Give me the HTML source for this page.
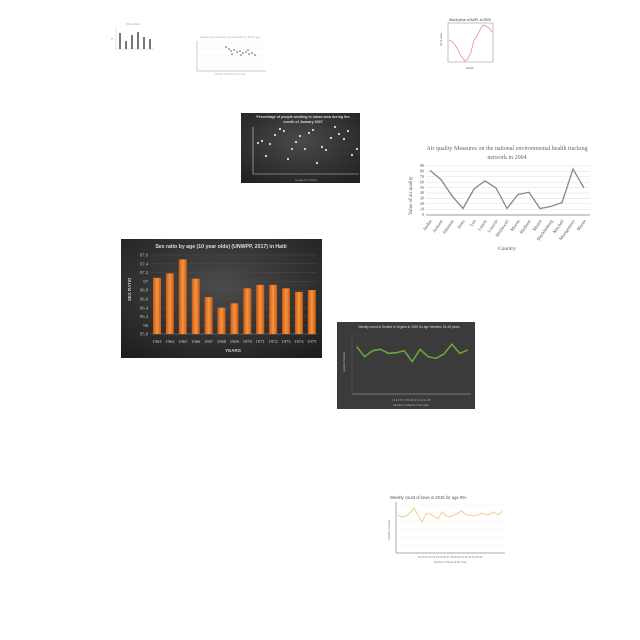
<!DOCTYPE html>
<html><head><meta charset="utf-8"><style>
html,body{margin:0;padding:0;background:#fff;width:640px;height:640px;overflow:hidden;position:relative;font-family:"Liberation Sans",sans-serif}
svg{position:absolute;display:block}
</style></head><body>

<!-- tiny bar chart -->
<svg style="left:108px;top:20px" width="50" height="34" viewBox="0 0 50 34">
<text x="25" y="5" font-size="2.5" fill="#999" text-anchor="middle">Title of chart</text>
<line x1="8" y1="8" x2="8" y2="29" stroke="#bbb" stroke-width="0.4"/>
<line x1="8" y1="29" x2="46" y2="29" stroke="#bbb" stroke-width="0.4"/>
<g fill="#777"><rect x="11" y="13" width="2" height="16"/><rect x="17" y="21" width="2" height="8"/><rect x="23" y="15" width="2" height="14"/><rect x="29" y="12" width="2" height="17"/><rect x="35" y="17" width="2" height="12"/><rect x="41" y="19" width="2" height="10"/></g>
<text x="3" y="20" font-size="2.5" fill="#999">%</text>
</svg>

<!-- light scatter -->
<svg style="left:188px;top:33px" width="80" height="42" viewBox="0 0 80 42">
<text x="42" y="5" font-size="2.4" fill="#aaa" text-anchor="middle">Weekly count of deaths in the Hampshire for 85 and age</text>
<g stroke="#eee" stroke-width="0.4"><line x1="9" y1="10" x2="78" y2="10"/><line x1="9" y1="16" x2="78" y2="16"/><line x1="9" y1="22" x2="78" y2="22"/><line x1="9" y1="28" x2="78" y2="28"/><line x1="9" y1="34" x2="78" y2="34"/></g>
<line x1="9" y1="8" x2="9" y2="38" stroke="#999" stroke-width="0.5"/>
<line x1="9" y1="38" x2="78" y2="38" stroke="#999" stroke-width="0.5"/>
<g fill="#556"><circle cx="38" cy="14" r="0.8"/><circle cx="41" cy="16" r="0.8"/><circle cx="43" cy="18" r="0.8"/><circle cx="46" cy="17" r="0.8"/><circle cx="49" cy="19" r="0.8"/><circle cx="52" cy="18" r="0.8"/><circle cx="55" cy="20" r="0.8"/><circle cx="58" cy="19" r="0.8"/><circle cx="61" cy="21" r="0.8"/><circle cx="64" cy="20" r="0.8"/><circle cx="67" cy="22" r="0.8"/><circle cx="44" cy="21" r="0.8"/><circle cx="53" cy="22" r="0.8"/><circle cx="60" cy="17" r="0.8"/></g>
<text x="42" y="42" font-size="2.4" fill="#aaa" text-anchor="middle">Number of Month of the year</text>
</svg>

<!-- stock price -->
<svg style="left:438px;top:16px" width="62" height="56" viewBox="0 0 62 56">
<text x="32" y="5" font-size="3.4" fill="#333" text-anchor="middle">Stock price of AAPL in 2000</text>
<rect x="10" y="7" width="45" height="39" fill="none" stroke="#888" stroke-width="0.5"/>
<polyline fill="none" stroke="#e58ca0" stroke-width="0.8" points="11,24 15,26 19,32 23,40 27,45 30,43 33,36 36,24 39,20 42,14 45,9 48,10 52,13 54,16"/>
<text x="4" y="30" font-size="2.5" fill="#666" transform="rotate(-90 4 30)">Stock value</text>
<text x="32" y="53" font-size="2.8" fill="#666" text-anchor="middle">Month</text>
</svg>

<!-- dark scatter -->
<svg style="left:241px;top:113px" width="119" height="70" viewBox="0 0 119 70">
<defs><radialGradient id="dg" cx="50%" cy="40%" r="70%"><stop offset="0" stop-color="#4a4a4a"/><stop offset="1" stop-color="#222"/></radialGradient></defs>
<rect width="119" height="70" fill="url(#dg)"/>
<text x="62" y="5" font-size="3.6" fill="#ddd" text-anchor="middle" font-weight="bold">Percentage of people working in urban area during the</text>
<text x="62" y="10" font-size="3.6" fill="#ddd" text-anchor="middle" font-weight="bold">month of January 2007</text>
<g stroke="#444" stroke-width="0.3"><line x1="12" y1="16" x2="118" y2="16"/><line x1="12" y1="24" x2="118" y2="24"/><line x1="12" y1="32" x2="118" y2="32"/><line x1="12" y1="40" x2="118" y2="40"/><line x1="12" y1="48" x2="118" y2="48"/><line x1="12" y1="56" x2="118" y2="56"/></g>
<line x1="12" y1="14" x2="12" y2="61" stroke="#ccc" stroke-width="0.6"/>
<line x1="12" y1="61" x2="118" y2="61" stroke="#ccc" stroke-width="0.6"/>
<g fill="#ddd"><circle cx="17" cy="30" r="1.1"/><circle cx="21" cy="28" r="1.1"/><circle cx="25" cy="43" r="1.1"/><circle cx="29" cy="31" r="1.1"/><circle cx="34" cy="22" r="1.1"/><circle cx="39" cy="16" r="1.1"/><circle cx="43" cy="18" r="1.1"/><circle cx="47" cy="46" r="1.1"/><circle cx="51" cy="36" r="1.1"/><circle cx="55" cy="29" r="1.1"/><circle cx="59" cy="23" r="1.1"/><circle cx="64" cy="36" r="1.1"/><circle cx="68" cy="20" r="1.1"/><circle cx="72" cy="17" r="1.1"/><circle cx="76" cy="50" r="1.1"/><circle cx="81" cy="34" r="1.1"/><circle cx="85" cy="37" r="1.1"/><circle cx="90" cy="25" r="1.1"/><circle cx="94" cy="14" r="1.1"/><circle cx="98" cy="21" r="1.1"/><circle cx="103" cy="26" r="1.1"/><circle cx="107" cy="18" r="1.1"/><circle cx="111" cy="42" r="1.1"/><circle cx="116" cy="36" r="1.1"/></g>
<text x="65" y="68" font-size="2.8" fill="#aaa" text-anchor="middle">people (% Urban)</text>
</svg>

<!-- air quality -->
<svg style="left:390px;top:135px" width="240" height="125" viewBox="0 0 240 125">
<text x="117" y="15" font-size="6" fill="#666" text-anchor="middle" font-family="Liberation Serif,serif">Air quality Measures on the national environmental health tracking</text>
<text x="117" y="24" font-size="6" fill="#666" text-anchor="middle" font-family="Liberation Serif,serif">network in 2004</text>
<g stroke="#ddd" stroke-width="0.5">
<line x1="36" y1="31" x2="200" y2="31"/><line x1="36" y1="36.4" x2="200" y2="36.4"/><line x1="36" y1="41.8" x2="200" y2="41.8"/><line x1="36" y1="47.2" x2="200" y2="47.2"/><line x1="36" y1="52.6" x2="200" y2="52.6"/><line x1="36" y1="58" x2="200" y2="58"/><line x1="36" y1="63.4" x2="200" y2="63.4"/><line x1="36" y1="68.8" x2="200" y2="68.8"/><line x1="36" y1="74.2" x2="200" y2="74.2"/></g>
<line x1="36" y1="80" x2="200" y2="80" stroke="#777" stroke-width="0.8"/>
<g font-size="4.2" fill="#555" text-anchor="end" font-family="Liberation Serif,serif"><text x="34" y="81">0</text><text x="34" y="75.5">10</text><text x="34" y="70">20</text><text x="34" y="64.6">30</text><text x="34" y="59.2">40</text><text x="34" y="53.8">50</text><text x="34" y="48.4">60</text><text x="34" y="43">70</text><text x="34" y="37.6">80</text><text x="34" y="32.2">90</text></g>
<text x="22" y="80" font-size="5" fill="#555" transform="rotate(-90 22 80)" font-family="Liberation Serif,serif">Value of air quality</text>
<polyline fill="none" stroke="#888" stroke-width="1.3" points="40,35.4 51,44.6 62,60.8 73,73.5 84,54 95,45.9 106,53 117,73.5 128,59.5 139,57.3 150,73.5 161,71.4 172,67.6 183,34.1 194,53"/>
<g font-size="4.6" fill="#555" font-family="Liberation Serif,serif">
<text transform="translate(42,86) rotate(-55)" text-anchor="end">Jordan</text>
<text transform="translate(53,86) rotate(-55)" text-anchor="end">Jackson</text>
<text transform="translate(64,86) rotate(-55)" text-anchor="end">Johnston</text>
<text transform="translate(75,86) rotate(-55)" text-anchor="end">Jones</text>
<text transform="translate(86,86) rotate(-55)" text-anchor="end">Lee</text>
<text transform="translate(97,86) rotate(-55)" text-anchor="end">Lenoir</text>
<text transform="translate(108,86) rotate(-55)" text-anchor="end">Lincoln</text>
<text transform="translate(119,86) rotate(-55)" text-anchor="end">McDowell</text>
<text transform="translate(130,86) rotate(-55)" text-anchor="end">Macon</text>
<text transform="translate(141,86) rotate(-55)" text-anchor="end">Madison</text>
<text transform="translate(152,86) rotate(-55)" text-anchor="end">Martin</text>
<text transform="translate(163,86) rotate(-55)" text-anchor="end">Mecklenburg</text>
<text transform="translate(174,86) rotate(-55)" text-anchor="end">Mitchell</text>
<text transform="translate(185,86) rotate(-55)" text-anchor="end">Montgomery</text>
<text transform="translate(196,86) rotate(-55)" text-anchor="end">Moore</text>
</g>
<text x="117" y="115" font-size="5.5" fill="#555" text-anchor="middle" font-family="Liberation Serif,serif">Country</text>
</svg>

<!-- orange bar chart -->
<svg style="left:121px;top:239px" width="201" height="119" viewBox="0 0 201 119">
<defs>
<radialGradient id="og" cx="50%" cy="40%" r="75%"><stop offset="0" stop-color="#4b4b4b"/><stop offset="1" stop-color="#1e1e1e"/></radialGradient>
<linearGradient id="bar" x1="0" x2="1"><stop offset="0" stop-color="#c85a14"/><stop offset=".5" stop-color="#f7953f"/><stop offset="1" stop-color="#c85a14"/></linearGradient>
</defs>
<rect width="201" height="119" fill="url(#og)"/>
<text x="100" y="9" font-size="5.2" fill="#ddd" text-anchor="middle" font-weight="bold">Sex ratio by age (10 year olds) (UNWPP, 2017) in Haiti</text>
<g stroke="#505050" stroke-width="0.4">
<line x1="30" y1="16" x2="196" y2="16"/><line x1="30" y1="24.8" x2="196" y2="24.8"/><line x1="30" y1="33.6" x2="196" y2="33.6"/><line x1="30" y1="42.4" x2="196" y2="42.4"/><line x1="30" y1="51.2" x2="196" y2="51.2"/><line x1="30" y1="60" x2="196" y2="60"/><line x1="30" y1="68.8" x2="196" y2="68.8"/><line x1="30" y1="77.6" x2="196" y2="77.6"/><line x1="30" y1="86.4" x2="196" y2="86.4"/></g>
<line x1="30" y1="95" x2="196" y2="95" stroke="#888" stroke-width="0.6"/>
<g font-size="4.6" fill="#ccc" font-family="Liberation Serif,serif" text-anchor="end">
<text x="27" y="17.5">97.6</text><text x="27" y="26.3">97.4</text><text x="27" y="35.1">97.2</text><text x="27" y="43.9">97</text><text x="27" y="52.7">96.8</text><text x="27" y="61.5">96.6</text><text x="27" y="70.3">96.4</text><text x="27" y="79.1">96.2</text><text x="27" y="87.9">96</text><text x="27" y="96.5">95.8</text></g>
<text x="10" y="62" font-size="4.4" fill="#ccc" font-weight="bold" transform="rotate(-90 10 62)">SEX RATIO</text>
<g fill="url(#bar)">
<rect x="32" y="38.8" width="8" height="56.2"/><rect x="44.9" y="34.4" width="8" height="60.6"/><rect x="57.8" y="20.4" width="8" height="74.6"/><rect x="70.7" y="39.7" width="8" height="55.3"/><rect x="83.6" y="58.1" width="8" height="36.9"/><rect x="96.5" y="68.7" width="8" height="26.3"/><rect x="109.4" y="64.3" width="8" height="30.7"/><rect x="122.3" y="49.3" width="8" height="45.7"/><rect x="135.2" y="45.8" width="8" height="49.2"/><rect x="148.1" y="45.8" width="8" height="49.2"/><rect x="161" y="49.3" width="8" height="45.7"/><rect x="173.9" y="52.9" width="8" height="42.1"/><rect x="186.8" y="51.1" width="8" height="43.9"/></g>
<g font-size="4.6" fill="#ccc" text-anchor="middle" font-family="Liberation Serif,serif">
<text x="36" y="104">1963</text><text x="48.9" y="104">1964</text><text x="61.8" y="104">1965</text><text x="74.7" y="104">1966</text><text x="87.6" y="104">1967</text><text x="100.5" y="104">1968</text><text x="113.4" y="104">1969</text><text x="126.3" y="104">1970</text><text x="139.2" y="104">1971</text><text x="152.1" y="104">1972</text><text x="165" y="104">1973</text><text x="177.9" y="104">1974</text><text x="190.8" y="104">1975</text></g>
<text x="112" y="113" font-size="4.6" fill="#ccc" font-weight="bold" text-anchor="middle">YEARS</text>
</svg>

<!-- green dark chart -->
<svg style="left:337px;top:322px" width="138" height="87" viewBox="0 0 138 87">
<rect width="138" height="87" fill="#3b3b3b"/>
<text x="72" y="6" font-size="3.2" fill="#ddd" text-anchor="middle">Weekly count of Deaths in Virginia in 2020 for age between 25-35 years</text>
<g stroke="#4a4a4a" stroke-width="0.3"><line x1="15" y1="12" x2="134" y2="12"/><line x1="15" y1="22" x2="134" y2="22"/><line x1="15" y1="32" x2="134" y2="32"/><line x1="15" y1="42" x2="134" y2="42"/><line x1="15" y1="52" x2="134" y2="52"/><line x1="15" y1="62" x2="134" y2="62"/></g>
<line x1="15" y1="72" x2="134" y2="72" stroke="#bbb" stroke-width="0.6"/>
<line x1="15" y1="10" x2="15" y2="72" stroke="#666" stroke-width="0.4"/>
<polyline fill="none" stroke="#6aaa3a" stroke-width="1.5" points="19.7,24.7 27.6,34.7 35.5,28.7 43.5,27.3 51.4,31.3 59.3,30.7 67.3,28.7 75.2,39.7 83.1,27.3 91,34.7 99,36.3 106.9,32 114.8,22.3 122.8,31.3 130.7,28"/>
<text x="8" y="50" font-size="2.6" fill="#bbb" transform="rotate(-90 8 50)">number of deaths</text>
<text x="74" y="79" font-size="2.5" fill="#bbb" text-anchor="middle">1 2 3 4 5 6 7 8 9 10 11 12 13 14 15</text>
<text x="74" y="84" font-size="2.8" fill="#bbb" text-anchor="middle">Number of Week of the Year</text>
</svg>

<!-- beige line chart -->
<svg style="left:378px;top:492px" width="130" height="72" viewBox="0 0 130 72">
<text x="12" y="7" font-size="4.2" fill="#555">Weekly count of Iowa in 2015 for age 85+</text>
<g stroke="#eee" stroke-width="0.4"><line x1="18" y1="13" x2="127" y2="13"/><line x1="18" y1="21" x2="127" y2="21"/><line x1="18" y1="29" x2="127" y2="29"/><line x1="18" y1="37" x2="127" y2="37"/><line x1="18" y1="45" x2="127" y2="45"/><line x1="18" y1="53" x2="127" y2="53"/></g>
<line x1="18" y1="10" x2="18" y2="61" stroke="#555" stroke-width="0.5"/>
<line x1="18" y1="61" x2="127" y2="61" stroke="#555" stroke-width="0.6"/>
<polyline fill="none" stroke="#f0d090" stroke-width="1" points="20,23 24,25 28,24 32,21 36,16 40,23 44,30 48,22 52,22 56,24 60,27 64,20 68,24 72,25 76,23 80,21 84,19 88,23 92,23 96,24 100,23 104,21 108,23 112,22 116,20 120,23 124,19"/>
<text x="12" y="48" font-size="2.6" fill="#777" transform="rotate(-90 12 48)">number of deaths</text>
<text x="72" y="66" font-size="2.6" fill="#777" text-anchor="middle">19 20 21 22 23 24 25 26 27 28 29 30 31 32 33 34 35 36</text>
<text x="72" y="71" font-size="2.6" fill="#777" text-anchor="middle">Number of Week of the Year</text>
</svg>

</body></html>
